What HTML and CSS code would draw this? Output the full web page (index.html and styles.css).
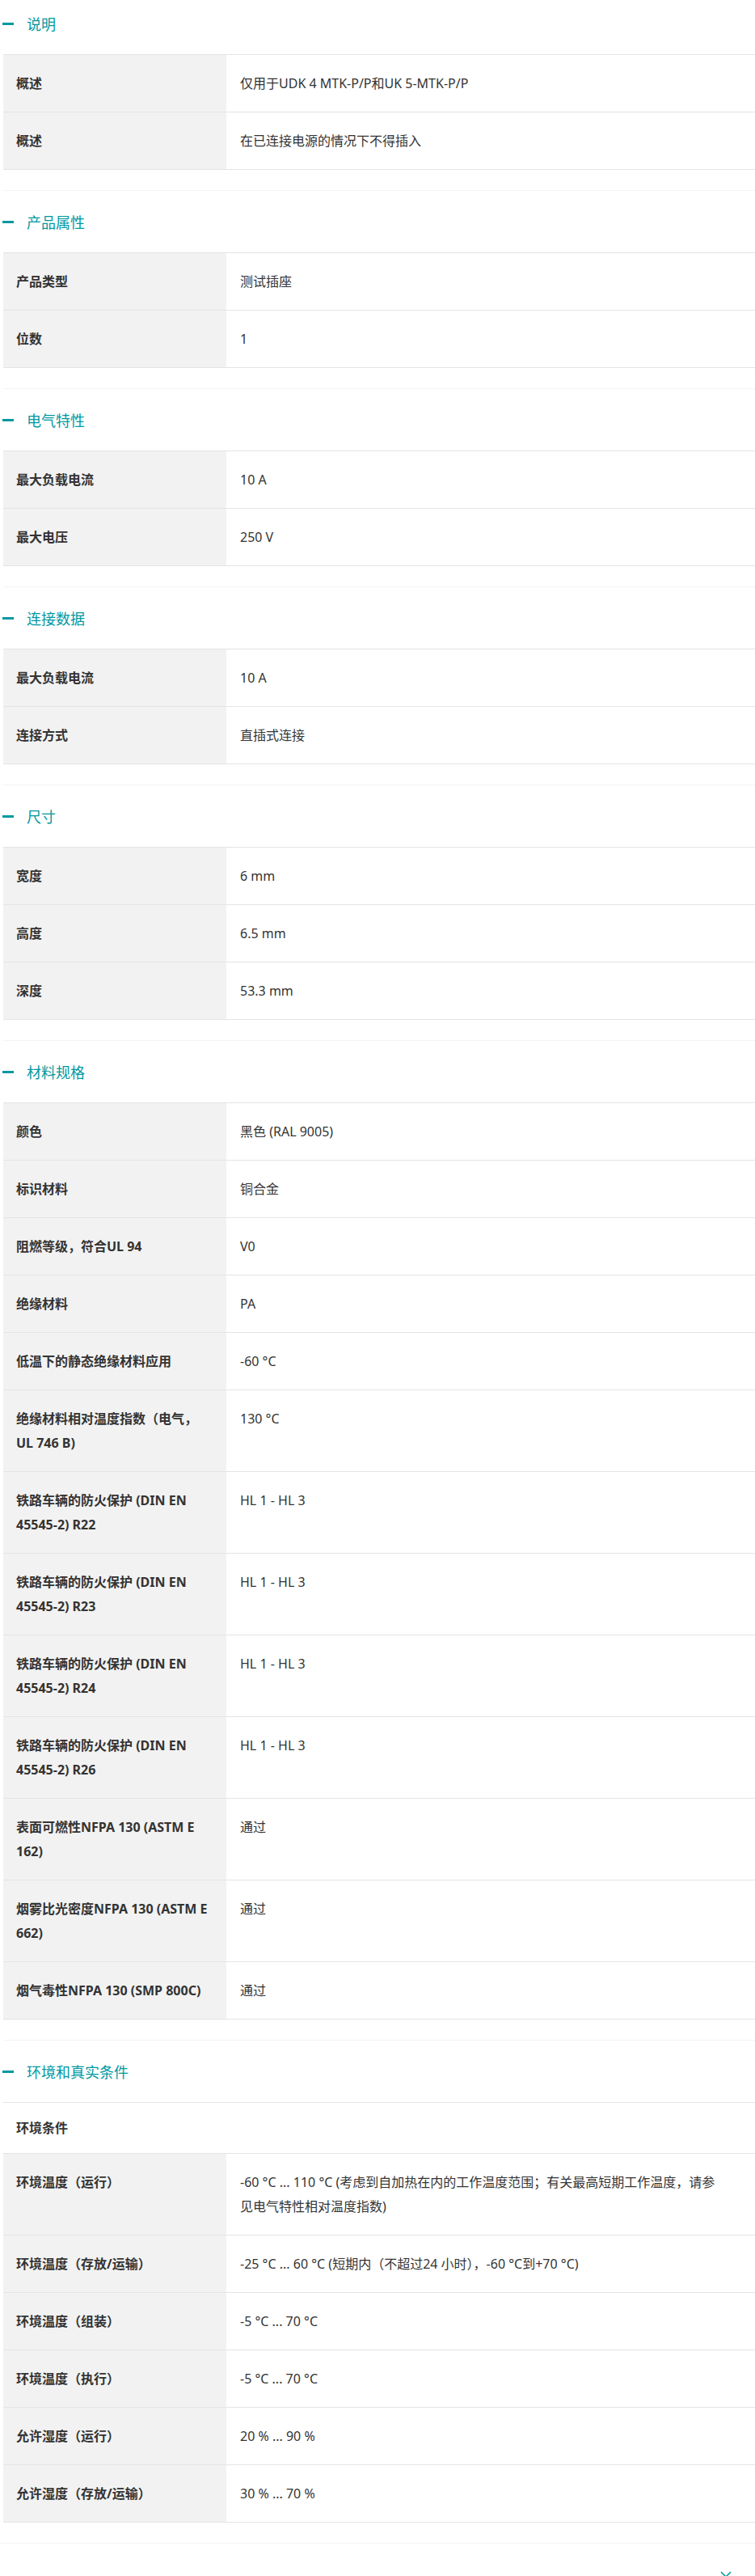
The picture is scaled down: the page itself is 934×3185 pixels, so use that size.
FILE: index.html
```html
<!DOCTYPE html>
<html lang="zh-CN">

<head>
    <meta charset="UTF-8">
    <meta name="viewport" content="width=device-width, initial-scale=1.0">
    <title>技术数据</title>
    <link rel="stylesheet" href="styles.css">
</head>

<body>
    <div class="specs">

        <section class="spec-group first">
            <h2 class="spec-title">说明</h2>
            <table class="spec-table">
                <colgroup><col class="col-label"><col></colgroup>
                <tr><th>概述</th><td>仅用于UDK 4 MTK-P/P和UK 5-MTK-P/P</td></tr>
                <tr><th>概述</th><td>在已连接电源的情况下不得插入</td></tr>
            </table>
        </section>

        <section class="spec-group">
            <h2 class="spec-title">产品属性</h2>
            <table class="spec-table">
                <colgroup><col class="col-label"><col></colgroup>
                <tr><th>产品类型</th><td>测试插座</td></tr>
                <tr><th>位数</th><td>1</td></tr>
            </table>
        </section>

        <section class="spec-group">
            <h2 class="spec-title">电气特性</h2>
            <table class="spec-table">
                <colgroup><col class="col-label"><col></colgroup>
                <tr><th>最大负载电流</th><td>10 A</td></tr>
                <tr><th>最大电压</th><td>250 V</td></tr>
            </table>
        </section>

        <section class="spec-group">
            <h2 class="spec-title">连接数据</h2>
            <table class="spec-table">
                <colgroup><col class="col-label"><col></colgroup>
                <tr><th>最大负载电流</th><td>10 A</td></tr>
                <tr><th>连接方式</th><td>直插式连接</td></tr>
            </table>
        </section>

        <section class="spec-group">
            <h2 class="spec-title">尺寸</h2>
            <table class="spec-table">
                <colgroup><col class="col-label"><col></colgroup>
                <tr><th>宽度</th><td>6 mm</td></tr>
                <tr><th>高度</th><td>6.5 mm</td></tr>
                <tr><th>深度</th><td>53.3 mm</td></tr>
            </table>
        </section>

        <section class="spec-group">
            <h2 class="spec-title">材料规格</h2>
            <table class="spec-table">
                <colgroup><col class="col-label"><col></colgroup>
                <tr><th>颜色</th><td>黑色 (RAL 9005)</td></tr>
                <tr><th>标识材料</th><td>铜合金</td></tr>
                <tr><th>阻燃等级，符合UL 94</th><td>V0</td></tr>
                <tr><th>绝缘材料</th><td>PA</td></tr>
                <tr><th>低温下的静态绝缘材料应用</th><td>-60 °C</td></tr>
                <tr><th>绝缘材料相对温度指数（电气，UL 746 B)</th><td>130 °C</td></tr>
                <tr><th>铁路车辆的防火保护 (DIN EN 45545-2) R22</th><td>HL 1 - HL 3</td></tr>
                <tr><th>铁路车辆的防火保护 (DIN EN 45545-2) R23</th><td>HL 1 - HL 3</td></tr>
                <tr><th>铁路车辆的防火保护 (DIN EN 45545-2) R24</th><td>HL 1 - HL 3</td></tr>
                <tr><th>铁路车辆的防火保护 (DIN EN 45545-2) R26</th><td>HL 1 - HL 3</td></tr>
                <tr><th>表面可燃性NFPA 130 (ASTM E 162)</th><td>通过</td></tr>
                <tr><th>烟雾比光密度NFPA 130 (ASTM E 662)</th><td>通过</td></tr>
                <tr><th>烟气毒性NFPA 130 (SMP 800C)</th><td>通过</td></tr>
            </table>
        </section>

        <section class="spec-group">
            <h2 class="spec-title">环境和真实条件</h2>
            <table class="spec-table">
                <colgroup><col class="col-label"><col></colgroup>
                <tr class="sub-head"><th colspan="2">环境条件</th></tr>
                <tr><th>环境温度（运行）</th><td>-60 °C ... 110 °C (考虑到自加热在内的工作温度范围；有关最高短期工作温度，请参见电气特性相对温度指数)</td></tr>
                <tr><th>环境温度（存放/运输）</th><td>-25 °C ... 60 °C (短期内（不超过24 小时），-60 °C到+70 °C)</td></tr>
                <tr><th>环境温度（组装）</th><td>-5 °C ... 70 °C</td></tr>
                <tr><th>环境温度（执行）</th><td>-5 °C ... 70 °C</td></tr>
                <tr><th>允许湿度（运行）</th><td>20 % ... 90 %</td></tr>
                <tr><th>允许湿度（存放/运输）</th><td>30 % ... 70 %</td></tr>
            </table>
        </section>

    </div>

    <div class="more-bar">
        <svg class="chevron" width="14" height="8" viewBox="0 0 14 8">
            <polyline points="1,1 7,7 13,1" fill="none" stroke="#0098a1" stroke-width="1.6" />
        </svg>
    </div>
</body>

</html>
```

FILE: styles.css
```css
/* Reset */
* {
    margin: 0;
    padding: 0;
    box-sizing: border-box;
}

body {
    background-color: #fff;
    color: #333;
    font-family: "Noto Sans", "Noto Sans CJK SC", sans-serif;
    font-size: 16px;
}

.specs {
    padding-left: 4px;
}

.spec-group {
    border-top: 1px solid #f3f3f3;
    padding: 26px 0 25px;
}

.spec-group.first {
    border-top: none;
    padding-top: 17px;
}

.spec-title {
    display: flex;
    align-items: center;
    gap: 16px;
    height: 24px;
    margin-bottom: 26px;
    margin-left: -1px;
    color: #0098a1;
    font-size: 18px;
    font-weight: 400;
}

.spec-title::before {
    content: "";
    width: 14px;
    height: 3px;
    background-color: #0098a1;
}

.spec-table {
    width: 100%;
    border-collapse: collapse;
    table-layout: fixed;
    border-top: 1px solid #e4e4e6;
}

.spec-table .col-label {
    width: 276px;
}

.spec-table tr {
    border-bottom: 1px solid #e4e4e6;
}

.spec-table th,
.spec-table td {
    padding: 20px 16px;
    line-height: 30px;
    font-size: 16px;
    text-align: left;
    vertical-align: top;
}

.spec-table th {
    background-color: #f2f2f2;
    font-weight: 700;
}

.spec-table td {
    padding-left: 17px;
    padding-right: 34px;
    font-weight: 400;
}

.spec-table .sub-head th {
    background-color: #fff;
    padding-top: 16px;
    padding-bottom: 16px;
}

.more-bar {
    border-top: 1px solid #f3f3f3;
    height: 60px;
    display: flex;
    justify-content: flex-end;
    align-items: flex-start;
    padding: 34px 29px 0 0;
}
```
